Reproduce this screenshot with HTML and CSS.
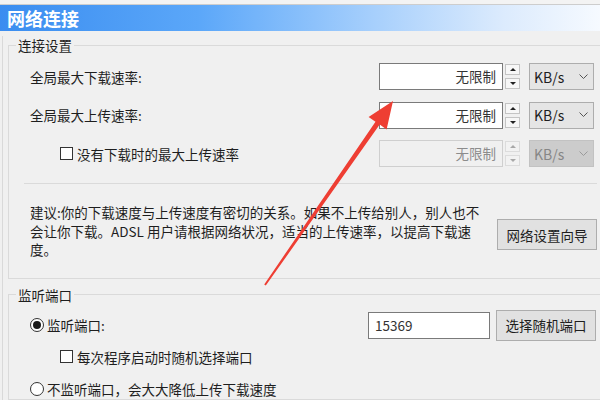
FILE: index.html
```html
<!DOCTYPE html>
<html lang="zh-CN">
<head>
    <meta charset="UTF-8">
    <meta name="viewport" content="width=device-width, initial-scale=1.0">
    <title>网络连接</title>
    <link rel="stylesheet" href="styles.css">
</head>
<body>
    <div class="topstrip"></div>
    <div class="titlebar">网络连接</div>
    <div class="window">
        <fieldset class="group group-speed">
            <legend>连接设置</legend>
            <div class="rows">
                <div class="row">
                    <span class="label">全局最大下载速率:</span>
                    <div class="num">无限制</div>
                    <div class="spin"><span class="up"></span><span class="down"></span></div>
                    <div class="select"><span>KB/s</span><svg width="9" height="6" viewBox="0 0 9 6"><polyline points="0.5,0.5 4.5,4.5 8.5,0.5" /></svg></div>
                </div>
                <div class="row">
                    <span class="label">全局最大上传速率:</span>
                    <div class="num">无限制</div>
                    <div class="spin"><span class="up"></span><span class="down"></span></div>
                    <div class="select"><span>KB/s</span><svg width="9" height="6" viewBox="0 0 9 6"><polyline points="0.5,0.5 4.5,4.5 8.5,0.5" /></svg></div>
                </div>
                <div class="row disabled">
                    <span class="label indent"><span class="box"></span>没有下载时的最大上传速率</span>
                    <div class="num">无限制</div>
                    <div class="spin"><span class="up"></span><span class="down"></span></div>
                    <div class="select"><span>KB/s</span><svg width="9" height="6" viewBox="0 0 9 6"><polyline points="0.5,0.5 4.5,4.5 8.5,0.5" /></svg></div>
                </div>
            </div>
            <div class="sep"></div>
            <div class="advice">
                <p>建议:你的下载速度与上传速度有密切的关系。如果不上传给别人，别人也不<br>会让你下载。ADSL 用户请根据网络状况，适当的上传速率，以提高下载速<br>度。</p>
                <button class="btn">网络设置向导</button>
            </div>
        </fieldset>
        <fieldset class="group group-port">
            <legend>监听端口</legend>
            <div class="port-rows">
                <div class="row port-row">
                    <span class="label"><span class="radio checked"></span>监听端口:</span>
                    <div class="port">15369</div>
                    <button class="btn">选择随机端口</button>
                </div>
                <div class="line indent"><span class="box"></span>每次程序启动时随机选择端口</div>
                <div class="line last"><span class="radio"></span>不监听端口，会大大降低上传下载速度</div>
            </div>
        </fieldset>
    </div>
    <svg class="arrow" width="600" height="400" viewBox="0 0 600 400">
        <polygon points="264.2,284.4 375.5,121.8 368.6,116.9 393,101 386.6,129.5 379.7,124.6 265.8,285.6" />
    </svg>
</body>
</html>
```

FILE: styles.css
```css
* {
    box-sizing: border-box;
}
body {
    margin: 0;
    width: 600px;
    height: 400px;
    overflow: hidden;
    position: relative;
    background-color: #f0f0f0;
    font-family: "Noto Sans CJK SC", "Microsoft YaHei", sans-serif;
    font-size: 13.5px;
    color: #1e1e1e;
}
.topstrip {
    height: 5px;
    background: #f3f3f3;
    border-bottom: 1px solid #cdcdcd;
}
.titlebar {
    height: 26px;
    padding-left: 7px;
    line-height: 26px;
    font-size: 18px;
    font-weight: bold;
    color: #fff;
    background: linear-gradient(90deg, #3a8df0 0%, #5ba7f9 33%, #a6cffc 62%, #dcebfd 84%, #f6faff 100%);
}
.window {
    margin-left: 2px;
    border-left: 1px solid #d9d9d9;
    padding-left: 5px;
    height: 369px;
}
.group {
    margin: 5px -2px 0 0;
    padding: 0 4px 0 7px;
    border: 1px solid #dadada;
    min-width: 0;
}
.group legend {
    padding: 0 2px;
    line-height: 18px;
}
.group-port {
    margin-top: 7px;
}
.rows {
    padding: 9px 3px 0 14px;
    display: flex;
    flex-direction: column;
    gap: 11.5px;
}
.row {
    display: flex;
    align-items: center;
    height: 27px;
}
.label {
    flex: 1;
    display: flex;
    align-items: center;
}
.indent {
    padding-left: 30px;
}
.num {
    width: 124px;
    height: 27px;
    border: 1px solid #7a7a7a;
    background: #fff;
    text-align: right;
    padding-right: 6px;
    line-height: 25px;
    color: #333;
}
.spin {
    margin-left: 2px;
    width: 15px;
    height: 25px;
    display: flex;
    flex-direction: column;
    justify-content: space-between;
}
.spin span {
    height: 11px;
    border: 1px solid #c4c4c4;
    background: #f7f7f7;
    display: flex;
    align-items: center;
    justify-content: center;
}
.spin span::before {
    content: "";
    border-left: 3px solid transparent;
    border-right: 3px solid transparent;
}
.spin .up::before {
    border-bottom: 3px solid #222;
}
.spin .down::before {
    border-top: 3px solid #222;
}
.select {
    margin-left: 9px;
    width: 65px;
    height: 27px;
    border: 1px solid #adadad;
    background: #e5e5e5;
    display: flex;
    align-items: center;
    justify-content: space-between;
    padding: 0 5px 0 4px;
    font-size: 14px;
}
.select svg polyline {
    fill: none;
    stroke: #555;
    stroke-width: 1;
}
.disabled .num {
    background: #f0f0f0;
    border-color: #cfcfcf;
    color: #8c8c8c;
}
.disabled .spin span {
    border-color: #dcdcdc;
    background: #f2f2f2;
}
.disabled .spin .up::before {
    border-bottom-color: #a8a8a8;
}
.disabled .spin .down::before {
    border-top-color: #a8a8a8;
}
.disabled .select {
    background: #cccccc;
    border-color: #c2c2c2;
    color: #868686;
}
.disabled .select svg polyline {
    stroke: #9a9a9a;
}
.box {
    width: 13px;
    height: 13px;
    border: 1px solid #333;
    background: #fff;
    margin-right: 4px;
}
.radio {
    width: 14px;
    height: 14px;
    border: 1px solid #333;
    border-radius: 50%;
    background: #fff;
    margin-right: 3px;
    display: flex;
    align-items: center;
    justify-content: center;
}
.radio.checked::after {
    content: "";
    width: 8px;
    height: 8px;
    border-radius: 50%;
    background: #1a1a1a;
}
.sep {
    margin: 16px 0 0 8px;
    border-top: 1px solid #dadada;
}
.advice {
    display: flex;
    align-items: flex-start;
    justify-content: space-between;
    padding: 0 0 19px 14px;
}
.advice p {
    margin: 19px 0 0;
    line-height: 18.5px;
    white-space: nowrap;
}
.btn {
    font: inherit;
    color: #1e1e1e;
    border: 1px solid #adadad;
    background: #e1e1e1;
    width: 100px;
    height: 31px;
    padding: 0;
}
.advice .btn {
    margin-top: 35px;
}
.port-rows {
    padding: 6px 1px 0 14px;
}
.port-row {
    height: 31px;
}
.port {
    width: 122px;
    height: 27px;
    border: 1px solid #7a7a7a;
    background: #fff;
    padding-left: 6px;
    line-height: 25px;
    color: #333;
}
.port-row .btn {
    margin-left: 6px;
}
.line {
    display: flex;
    align-items: center;
    height: 20px;
    margin-top: 6px;
}
.line.last {
    margin-top: 12px;
}
.arrow {
    position: absolute;
    top: 0;
    left: 0;
    pointer-events: none;
}
.arrow polygon {
    fill: #ee3e33;
}
```
